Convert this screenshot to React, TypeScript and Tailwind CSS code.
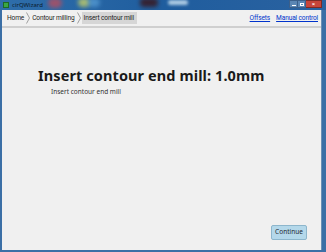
import React from "react";

export default function App() {
  return (
    <div className="w-[326px] h-[252px] overflow-hidden relative bg-[#3b6fa6] flex flex-col" style={{ fontFamily: '"Noto Sans", "Open Sans", sans-serif' }}>
      {/* title bar */}
      <div className="h-[10px] relative flex items-center bg-gradient-to-r from-[#2f6eaa] via-[#1f5d9e] to-[#2a62a0] overflow-hidden">
        <div className="absolute left-[48px] top-[-2px] w-[14px] h-[10px] rounded-full bg-[#c94a55] blur-[2px] opacity-70" />
        <div className="absolute left-[78px] top-[-2px] w-[12px] h-[9px] rounded-full bg-[#d9dd60] blur-[2px] opacity-70" />
        <div className="absolute left-[88px] top-[-2px] w-[12px] h-[9px] rounded-full bg-[#5aa0d8] blur-[2px] opacity-70" />
        <div className="absolute left-[140px] top-[-2px] w-[18px] h-[9px] rounded-sm bg-[#3a1418] blur-[2px] opacity-80" />
        <div className="absolute left-[168px] top-[0px] w-[20px] h-[5px] rounded-sm bg-[#cfe6f5] blur-[1.5px] opacity-80" />
        <div className="ml-[3px] w-[6px] h-[6px] bg-[#3aa645] border border-[#1d6a25]" />
        <span className="ml-[3px] text-[6px] leading-none text-[#0b1a2a]">cirQWizard</span>
        <div className="absolute right-[4px] top-0 flex h-[8px]">
          <div className="w-[9px] h-[8px] bg-[#5b86b4] border border-[#3b5f8a] flex items-end justify-center pb-[1px]"><div className="w-[4px] h-[1px] bg-white" /></div>
          <div className="w-[8px] h-[8px] bg-[#5b86b4] border-y border-r border-[#3b5f8a] flex items-center justify-center"><div className="w-[4px] h-[3px] border border-white" /></div>
          <div className="w-[16px] h-[8px] bg-[#c8453a] border-y border-r border-[#7e2a25] flex items-center justify-center text-white text-[6px] leading-none font-bold">×</div>
        </div>
      </div>
      {/* client */}
      <div className="flex-1 ml-[2px] mr-[4px] mb-[2px] bg-[#f0f0f0] flex flex-col border-r border-[#6b8fb5]">
        {/* breadcrumb */}
        <div className="h-[18px] flex items-center justify-between border-b-2 border-[#cfcfcf] bg-[#f0f0f0] pl-[4px] pr-[3px] tracking-[-0.15px]" style={{ fontFamily: 'Roboto, "Noto Sans", sans-serif' }}>
          <div className="flex items-center text-[6.6px] text-[#1c1c1c] leading-none">
            <span className="px-[1px]">Home</span>
            <Chev />
            <span className="px-[1px]">Contour milling</span>
            <Chev />
            <span className="bg-[#d6d6d6] h-[12px] flex items-center px-[2px] pr-[3px]">Insert contour mill</span>
          </div>
          <div className="flex items-center gap-[6px] text-[6.6px] text-[#0033cc] underline leading-none">
            <span>Offsets</span>
            <span>Manual control</span>
          </div>
        </div>
        {/* content */}
        <div className="flex-1 flex flex-col relative">
          <div className="pl-[36px] pt-[40px]">
            <div className="text-[14.5px] font-bold text-[#1a1a1a] leading-none tracking-[0.1px]">Insert contour end mill: 1.0mm</div>
            <div className="pl-[13px] pt-[6px] text-[6.5px] text-[#333] leading-none">Insert contour end mill</div>
          </div>
          <div className="flex-1" />
          <div className="flex justify-end pr-[14px] pb-[10px]">
            <div className="w-[36px] h-[15px] bg-[#b4d8ea] border border-[#8db6cc] rounded-[2px] flex items-center justify-center text-[6.5px] text-[#1e2a33] leading-none">Continue</div>
          </div>
        </div>
      </div>
    </div>
  );
}

function Chev() {
  return (
    <svg width="4" height="12" viewBox="0 0 4 12" className="mx-[1px]">
      <path d="M0.5 0.5 L3.5 6 L0.5 11.5" stroke="#8a8a8a" strokeWidth="0.8" fill="none" />
    </svg>
  );
}
